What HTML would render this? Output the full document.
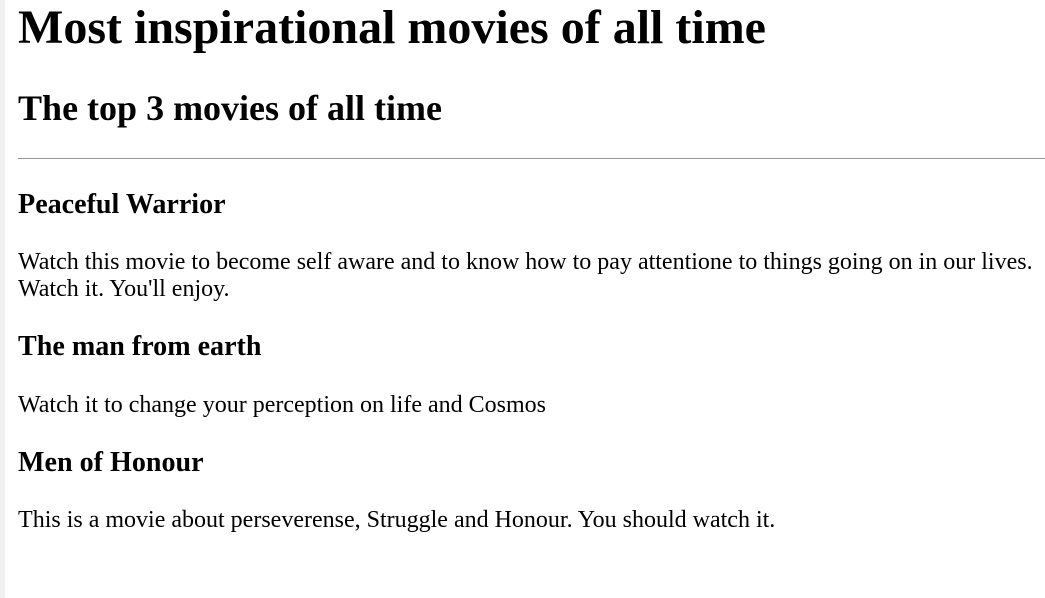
<!DOCTYPE html>
<html><head><meta charset="utf-8"><style>
html{margin:0;padding:0;background:#fff;}
body{margin:0;padding:0;border-left:5px solid #efefef;min-height:598px;box-sizing:border-box;font-family:"Liberation Serif",serif;color:#000;overflow:hidden;}
.w{zoom:1.5;margin:0 0 0 8.7px;}
h1{margin:0 0 0.67em;font-size:2em;}
h2{font-size:1.5em;margin:0.83em 0 0.8em;}
hr{margin:0.5em 0;border:0;border-top:1px solid #999;}
h3.f{margin-top:1.08em;}
</style></head><body><div class="w">
<h1>Most inspirational movies of all time</h1>
<h2>The top 3 movies of all time</h2>
<hr>
<h3 class="f">Peaceful Warrior</h3>
<p>Watch this movie to become self aware and to know how to pay attentione to things going on in our lives. Watch it. You'll enjoy.</p>
<h3>The man from earth</h3>
<p>Watch it to change your perception on life and Cosmos</p>
<h3>Men of Honour</h3>
<p>This is a movie about perseverense, Struggle and Honour. You should watch it.</p>
</div></body></html>
